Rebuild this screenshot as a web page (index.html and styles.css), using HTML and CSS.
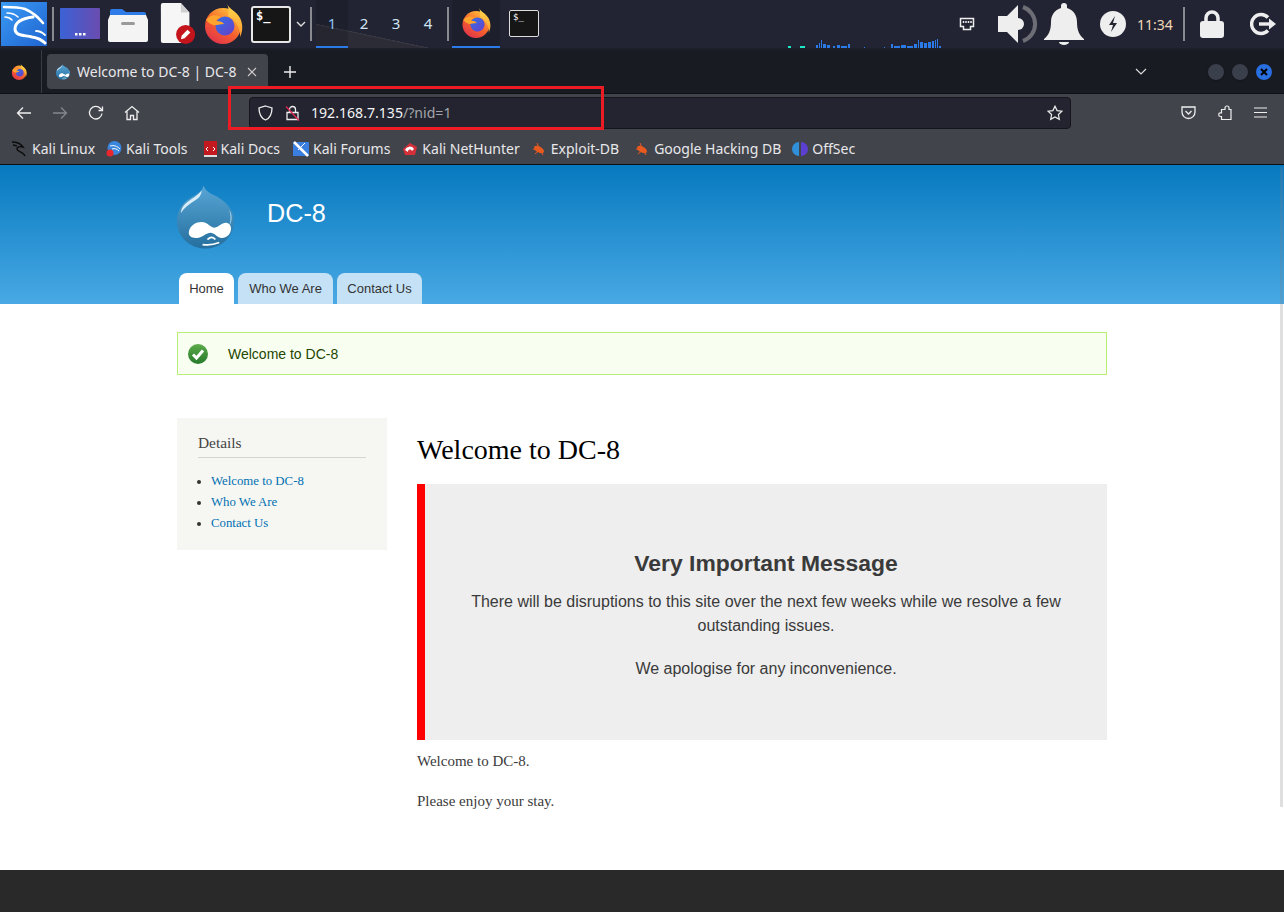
FILE: index.html
```html
<!DOCTYPE html>
<html lang="en">
<head>
    <meta charset="UTF-8">
    <title>Welcome to DC-8 | DC-8</title>
    <link rel="stylesheet" href="styles.css">
</head>
<body>
    <!-- desktop panel -->
    <section class="panel">
        <div class="panel-menu">
            <svg width="46" height="44" viewBox="0 0 46 44" fill="none" stroke="#fff" stroke-linecap="round" stroke-linejoin="round">
                <path d="M3 5c7 0 15 0 21 2 7 3 13 8 18 14" stroke-width="2.600"/>
                <path d="M32 15c-8 1-18 4-18 12 0 7 9 6 17 8 6 1 10 3 13 6" stroke-width="3"/>
                <path d="M6 11c4 0 8 1 11 4M4 15c3 0 5 1 7 3" stroke-width="1.600"/>
                <path d="M35 29c4 0 7 2 9 4" stroke-width="1.800"/>
            </svg>
        </div>
        <div class="launchers">
            <span class="sep sep-first"></span>
            <svg class="launch launch-desk" width="42" height="34" viewBox="0 0 42 34">
                <defs><linearGradient id="desk" x1="0" x2="1"><stop offset="0" stop-color="#3b62d6"/><stop offset="1" stop-color="#6a4cb0"/></linearGradient></defs>
                <rect x="1" y="1" width="40" height="31" rx="1" fill="url(#desk)"/>
                <rect x="16" y="26" width="2.500" height="2.500" fill="#fff"/><rect x="20" y="26" width="2.500" height="2.500" fill="#fff"/><rect x="24" y="26" width="2.500" height="2.500" fill="#fff"/>
            </svg>
            <svg class="launch" width="42" height="38" viewBox="0 0 42 38">
                <path d="M3 6a2 2 0 0 1 2-2h10l4 3h18a2 2 0 0 1 2 2v6H3z" fill="#2f7be8"/>
                <path d="M1 15l2-5h36l2 5v20a2 2 0 0 1-2 2H3a2 2 0 0 1-2-2z" fill="#f4f4f4"/>
                <rect x="14" y="17" width="14" height="3" rx="1.500" fill="#9a9a9a"/>
            </svg>
            <svg class="launch launch-doc" width="38" height="44" viewBox="0 0 40 44">
                <path d="M2 2a2 2 0 0 1 2-2h19l9 10v30a2 2 0 0 1-2 2H4a2 2 0 0 1-2-2z" fill="#f6f6f6"/>
                <path d="M23 0l9 10h-9z" fill="#cfcfcf"/>
                <circle cx="28" cy="33" r="10" fill="#c4141c"/>
                <path d="M23 38l1-4 6-6 3 3-6 6z" fill="#fff"/>
            </svg>
            <svg class="launch" width="40" height="40" viewBox="0 0 40 40">
                <use href="#fox"/>
            </svg>
            <div class="term-big"><span>$_</span></div>
            <svg class="chev" width="10" height="6" viewBox="0 0 10 6" fill="none" stroke="#ddd" stroke-width="1.400"><path d="M1 1l4 4 4-4"/></svg>
            <span class="sep"></span>
        </div>
        <div class="workspaces">
            <span class="ws ws-on">1</span>
            <span class="ws">2</span>
            <span class="ws">3</span>
            <span class="ws">4</span>
        </div>
        <span class="sep"></span>
        <div class="task task-on">
            <svg width="30" height="30" viewBox="0 0 40 40"><use href="#fox"/></svg>
        </div>
        <div class="task">
            <div class="term-small"><span>$_</span></div>
        </div>
        <div class="netload">
            <svg width="156" height="12" viewBox="0 0 156 12">
                <path d="M0 10h3v2H0zM12 10h5v2h-5z" fill="#1de9c8"/>
                <path d="M28 9h2v3h-2zM31 7h1v5h-1zM33 4h1v8h-1zM35 8h3v4h-3zM39 9h3v3h-3zM45 10h2v2h-2zM49 9h3v3h-3zM53 10h6v2h-6zM60 8h2v4h-2zM76 11h1v1h-1zM96 11h1v1h-1zM103 8h2v4h-2zM106 10h6v2h-6zM113 9h5v3h-5zM119 10h6v2h-6zM126 8h3v4h-3zM130 4h1v8h-1zM132 6h3v6h-3zM136 7h3v5h-3zM140 6h3v6h-3zM144 5h2v7h-2zM147 4h1v8h-1zM149 3h1v9h-1zM151 10h2v2h-2z" fill="#2a7be8"/>
            </svg>
        </div>
        <div class="tray">
            <svg class="tray-net" width="16" height="14" viewBox="0 0 16 14" fill="none" stroke="#eee" stroke-width="1.500"><path d="M1.500 1.500h13v8h-3v3h-7v-3h-3z"/><path d="M4.500 4v2M7 4v2M9.500 4v2M12 4v2"/></svg>
            <svg class="tray-vol" width="42" height="40" viewBox="0 0 42 40">
                <path d="M1 12h9L21 1v38L10 28H1z" fill="#eee"/>
                <path d="M21 14a6 6 0 0 1 6 6 6 6 0 0 1-6 6z" fill="#eee"/>
                <path d="M26 3a18 18 0 0 1 0 34" fill="none" stroke="#6c6d75" stroke-width="4"/>
            </svg>
            <svg class="tray-bell" width="40" height="42" viewBox="0 0 40 42">
                <path d="M20 0a3 3 0 0 1 3 3v2c7 2 10 8 10 14 0 8 2 13 7 17v1H0v-1c5-4 7-9 7-17 0-6 3-12 10-14V3a3 3 0 0 1 3-3z" fill="#eee"/>
                <path d="M15 39h10a5 3 0 0 1-10 0z" fill="#eee"/>
            </svg>
            <svg class="tray-power" width="26" height="26" viewBox="0 0 26 26">
                <circle cx="13" cy="13" r="13" fill="#eee"/>
                <path d="M15 5l-6 9h4l-2 7 6-9h-4z" fill="#23252f"/>
            </svg>
            <span class="clock">11:34</span>
            <span class="sep sep-tray"></span>
            <svg class="tray-lock" width="24" height="28" viewBox="0 0 24 28">
                <path d="M6 12V8a6 6 0 0 1 12 0v4" fill="none" stroke="#eee" stroke-width="3.500"/>
                <rect y="11" width="24" height="17" rx="3" fill="#eee"/>
            </svg>
            <svg class="tray-out" width="27" height="24" viewBox="0 0 27 24" fill="none" stroke="#eee" stroke-width="3.400">
                <path d="M18 5.500A9.500 9.500 0 1 0 18 18.500"/>
                <path d="M9 12h12"/>
                <path d="M19 6.500l7 5.500-7 5.500z" fill="#eee" stroke="none"/>
            </svg>
        </div>
    </section>

    <!-- browser chrome -->
    <section class="tabstrip">
        <div class="tab-fox">
            <svg width="16" height="16" viewBox="0 0 40 40"><use href="#fox"/></svg>
        </div>
        <div class="tab">
            <svg width="14" height="16" viewBox="0 0 58 64"><use href="#drop"/></svg>
            <span class="tab-title">Welcome to DC-8 | DC-8</span>
            <svg class="tab-x" width="10" height="10" viewBox="0 0 10 10" stroke="#ccc" stroke-width="1.100"><path d="M1 1l8 8M9 1l-8 8"/></svg>
        </div>
        <svg class="tab-new" width="14" height="14" viewBox="0 0 14 14" stroke="#eee" stroke-width="1.400"><path d="M7 1v12M1 7h12"/></svg>
        <svg class="tab-list" width="12" height="7" viewBox="0 0 12 7" fill="none" stroke="#ddd" stroke-width="1.200"><path d="M1 1l5 5 5-5"/></svg>
        <div class="winbtns">
            <span class="winbtn"></span>
            <span class="winbtn"></span>
            <span class="winbtn winbtn-close">
                <svg width="8" height="8" viewBox="0 0 8 8" stroke="#000" stroke-width="2"><path d="M1 1l6 6M7 1L1 7"/></svg>
            </span>
        </div>
    </section>

    <section class="navbar">
        <div class="nav-left">
            <svg width="16" height="14" viewBox="0 0 16 14" fill="none" stroke="#eee" stroke-width="1.300"><path d="M15 7H1.500M7 1.500L1.500 7 7 12.500"/></svg>
            <svg width="16" height="14" viewBox="0 0 16 14" fill="none" stroke="#85878d" stroke-width="1.300"><path d="M1 7h13.500M9 1.500L14.500 7 9 12.500"/></svg>
            <svg width="16" height="16" viewBox="0 0 16 16" fill="none" stroke="#eee" stroke-width="1.300"><path d="M14 8.500A6.300 6.300 0 1 1 12.500 3.500L14.500 5.500"/><path d="M14.500 1.500v4h-4"/></svg>
            <svg width="16" height="16" viewBox="0 0 16 16" fill="none" stroke="#eee" stroke-width="1.300"><path d="M1 7.500L8 1.500l7 6M3 6.500v8h3.500v-4h3v4H13v-8"/></svg>
        </div>
        <div class="urlbar">
            <svg width="15" height="16" viewBox="0 0 15 16" fill="none" stroke="#eee" stroke-width="1.300"><path d="M7.500 1L14 3c0 6-1.500 10-6.500 12C2.500 13 1 9 1 3z"/></svg>
            <svg class="url-lock" width="15" height="16" viewBox="0 0 15 16" fill="none">
                <path d="M4.500 7V4.500a3 3 0 0 1 6 0V7M2 7.500h11v7H2z" stroke="#eee" stroke-width="1.300"/>
                <path d="M1 1.500l13 14" stroke="#e22850" stroke-width="1.300"/>
            </svg>
            <span class="url-text">192.168.7.135<span class="url-rest">/?nid=1</span></span>
            <svg class="url-star" width="16" height="16" viewBox="0 0 16 16" fill="none" stroke="#eee" stroke-width="1.200"><path d="M8 1.200l2.100 4.400 4.800.6-3.500 3.300.9 4.800L8 12l-4.300 2.300.9-4.800L1.100 6.200l4.800-.6z"/></svg>
        </div>
        <div class="nav-right">
            <svg width="15" height="14" viewBox="0 0 15 14" fill="none" stroke="#eee" stroke-width="1.300"><path d="M1 1h13v5a6.500 6.500 0 0 1-13 0z"/><path d="M4.500 5l3 3 3-3"/></svg>
            <svg width="14" height="16" viewBox="0 0 14 16" fill="none" stroke="#eee" stroke-width="1.200"><path d="M4.500 4.500h2.500V3a2 2 0 0 1 4 0v1.500h2v10H3.500v-3h-1a1.800 1.800 0 0 1 0-3.600h1V4.500z"/></svg>
            <svg width="13" height="11" viewBox="0 0 13 11" stroke="#eee" stroke-width="1.200"><path d="M0 1h13M0 5.500h13M0 10h13"/></svg>
        </div>
    </section>

    <section class="bookmarks">
        <a class="bm">
            <svg width="16" height="16" viewBox="0 0 16 16" fill="none" stroke="#0c0c0c" stroke-width="1.500"><path d="M0 1c5 0 9 2 11 5-3-1-6 0-6 2 0 3 6 2 8 7"/><path d="M1 4c2 0 3 1 4 1"/></svg>
            Kali Linux
        </a>
        <a class="bm">
            <svg width="16" height="16" viewBox="0 0 16 16"><circle cx="8.500" cy="7" r="7" fill="#3a86dc"/><path d="M4 5c4-1 7 0 10 3M6 8c3-1 5 0 7 2" stroke="#fff" fill="none"/><circle cx="4" cy="12" r="3.500" fill="#e8262c"/></svg>
            Kali Tools
        </a>
        <a class="bm">
            <svg width="14" height="16" viewBox="0 0 14 16"><rect x="1" width="13" height="15" fill="#c41a1f"/><rect x="1" y="14" width="13" height="2" fill="#ddd"/><path d="M5 6l-2 2 2 2M10 6l2 2-2 2" stroke="#fff" fill="none"/></svg>
            Kali Docs
        </a>
        <a class="bm">
            <svg width="16" height="16" viewBox="0 0 16 16"><rect y="1" width="16" height="14" fill="#3a7fe0"/><path d="M1 1l14 14" stroke="#fff" stroke-width="2.500"/><path d="M12 2L5 9" stroke="#fff"/></svg>
            Kali Forums
        </a>
        <a class="bm">
            <svg width="16" height="16" viewBox="0 0 16 16"><path d="M1 8l7-6 7 4-2 8H3z" fill="#d4303a"/><path d="M3 9a5 5 0 0 1 9-1l-2 2a2 2 0 0 0-4 1z" fill="#fff"/></svg>
            Kali NetHunter
        </a>
        <a class="bm">
            <svg width="16" height="16" viewBox="0 0 16 16"><use href="#bug"/></svg>
            Exploit-DB
        </a>
        <a class="bm">
            <svg width="16" height="16" viewBox="0 0 16 16"><use href="#bug"/></svg>
            Google Hacking DB
        </a>
        <a class="bm">
            <svg width="16" height="16" viewBox="0 0 16 16"><path d="M7 1a7 7 0 0 0 0 14z" fill="#2f8fd8"/><path d="M9 1a7 7 0 0 1 0 14z" fill="#5b3fd0"/></svg>
            OffSec
        </a>
    </section>

    <!-- site -->
    <header class="site-head">
        <div class="site-brand">
            <svg class="site-logo" width="57" height="64" viewBox="0 0 58 64"><use href="#drop"/></svg>
            <span class="site-name">DC-8</span>
        </div>
        <nav class="site-tabs">
            <a class="site-tab site-tab-on">Home</a>
            <a class="site-tab">Who We Are</a>
            <a class="site-tab">Contact Us</a>
        </nav>
    </header>

    <main class="site-body">
        <div class="status">
            <svg width="20" height="20" viewBox="0 0 20 20">
                <circle cx="10" cy="10" r="10" fill="url(#okfill)"/>
                <path d="M5 10.500l3.500 3.500L15 6.500" fill="none" stroke="#fff" stroke-width="3"/>
            </svg>
            <span>Welcome to DC-8</span>
        </div>
        <div class="columns">
            <aside class="side">
                <h2 class="side-title">Details</h2>
                <ul class="side-list">
                    <li><a>Welcome to DC-8</a></li>
                    <li><a>Who We Are</a></li>
                    <li><a>Contact Us</a></li>
                </ul>
            </aside>
            <article class="content">
                <h1 class="page-title">Welcome to DC-8</h1>
                <div class="notice">
                    <h3 class="notice-head">Very Important Message</h3>
                    <p>There will be disruptions to this site over the next few weeks while we resolve a few outstanding issues.</p>
                    <p>We apologise for any inconvenience.</p>
                </div>
                <p class="text">Welcome to DC-8.</p>
                <p class="text">Please enjoy your stay.</p>
            </article>
        </div>
    </main>

    <footer class="site-foot"></footer>

    <!-- things that lie over the page -->
    <div class="scroll-thumb"></div>
    <div class="red-mark"></div>

    <svg class="defs" width="0" height="0">
        <defs>
            <linearGradient id="foxball" x1="0.8" y1="0.1" x2="0.2" y2="1"><stop offset="0" stop-color="#ffbd3a"/><stop offset="0.5" stop-color="#f6602d"/><stop offset="1" stop-color="#e0304f"/></linearGradient>
            <linearGradient id="foxtail" x1="0" y1="0" x2="0" y2="1"><stop offset="0" stop-color="#ffd84d"/><stop offset="1" stop-color="#ff9a2e"/></linearGradient>
            <linearGradient id="foxcore" x1="0" y1="0" x2="1" y2="1"><stop offset="0" stop-color="#2f72e8"/><stop offset="1" stop-color="#6a3fc8"/></linearGradient>
            <linearGradient id="dropfill" x1="0" y1="0" x2="0" y2="1"><stop offset="0" stop-color="#58a6d6"/><stop offset="1" stop-color="#256f9e"/></linearGradient>
            <linearGradient id="okfill" x1="0" y1="0" x2="0" y2="1"><stop offset="0" stop-color="#5cab4a"/><stop offset="1" stop-color="#267a2b"/></linearGradient>
            <g id="fox">
                <circle cx="20" cy="22" r="18" fill="url(#foxball)"/>
                <path d="M24 0c2 5 9 7 13 14 3 6 3 13 0 19 1-8-4-17-12-21 1-4 1-8-1-12z" fill="url(#foxtail)"/>
                <circle cx="22" cy="22" r="9.500" fill="url(#foxcore)"/>
                <path d="M3 16c4-5 9-6 15-3-2 1-4 2-5 4 4 0 7 1 8 3-5 0-9 2-11 1-3-1-5-3-7-5z" fill="#ffa52e"/>
            </g>
            <g id="drop">
                <path d="M27 0c-1 6-7 9-14 13C5 18 0 26 0 36c0 16 13 28 29 28s29-12 29-28c0-12-9-20-18-25C34 8 29 6 27 0z" fill="url(#dropfill)"/>
                <path d="M25 5c-3 5-12 9-17 14-3 3-4 6-4 9 3-5 8-9 13-12 5-3 8-6 8-11z" fill="#d8edf8"/>
                <path d="M53 25c2 5 2 11 0 16 3-3 4-11 0-16z" fill="#a6d3ec"/>
                <path d="M12 48c0-6 6-11 13-11 6 0 8 5 13 6 5-1 8-6 13-5 4 1 5 6 3 10-2 4-6 6-10 5-4-1-6-5-10-5-4 0-7 4-12 5-6 1-10-1-10-5z" fill="#fff"/>
                <path d="M26 60c6 1 12 0 17-2M31 55c3-3 6-3 8 0" fill="none" stroke="#fff" stroke-width="1.800"/>
            </g>
            <g id="bug">
                <ellipse cx="8" cy="8.500" rx="5.500" ry="3" transform="rotate(30 8 8.500)" fill="#e8591f"/>
                <path d="M2 8l3 .5M4 13l3-2.500M6 2l1.500 3.500M12 14l-1.500-3" stroke="#e8591f" fill="none"/>
            </g>
        </defs>
    </svg>
</body>
</html>
```

FILE: styles.css
```css
* {
    margin: 0;
    padding: 0;
    box-sizing: border-box;
}
html, body {
    height: 100%;
    overflow: hidden;
}
body {
    display: flex;
    flex-direction: column;
    background-color: #fff;
    font-family: "Liberation Sans", sans-serif;
    position: relative;
}
svg {
    display: block;
    flex-shrink: 0;
}
.defs {
    position: absolute;
}

/* panel */
.panel {
    height: 50px;
    background-color: #222433;
    border-bottom: 2px solid #1c1e28;
    display: flex;
    align-items: center;
    font-family: "Noto Sans", sans-serif;
    flex-shrink: 0;
}
.panel-menu {
    width: 46px;
    height: 44px;
    margin-left: 1px;
    background: linear-gradient(135deg, #3a9bf5, #1f63d0);
    display: flex;
    align-items: center;
    justify-content: center;
}
.launchers {
    display: flex;
    align-items: center;
}
.launch {
    margin-left: 6px;
}
.launch-desk {
    margin-left: 5px;
}
.launch-doc {
    margin-left: 10px;
}
.sep {
    width: 2px;
    height: 34px;
    background-color: #8a8b90;
    display: block;
    flex-shrink: 0;
}
.sep-first {
    margin-left: 5px;
}
.term-big {
    width: 40px;
    height: 37px;
    margin-left: 8px;
    background-color: #161616;
    border: 2px solid #e8e8e8;
    border-radius: 3px;
    color: #fff;
    font: bold 12px/14px "DejaVu Sans Mono", monospace;
    padding: 1px 3px;
}
.chev {
    margin: 0 4px 0 5px;
}
.workspaces {
    display: flex;
    height: 48px;
    margin-right: 3px;
    margin-left: 4px;
    background: linear-gradient(192deg, transparent 67.500%, #3a3b45 68%, #2b2c36 70%);
}
.ws {
    width: 32px;
    display: flex;
    align-items: center;
    justify-content: center;
    color: #cfe4f5;
    font-size: 15px;
    border-bottom: 2px solid transparent;
}
.ws-on {
    background-color: rgba(0, 0, 0, 0.12);
    border-bottom-color: #2a7be8;
    color: #8fc4ee;
}
.task {
    width: 48px;
    height: 48px;
    display: flex;
    align-items: center;
    justify-content: center;
    border-bottom: 2px solid transparent;
}
.task-on {
    margin-left: 3px;
    background-color: #1d1f2c;
    border-bottom-color: #2a7be8;
}
.term-small {
    width: 30px;
    height: 27px;
    background-color: #161616;
    border: 1px solid #ddd;
    border-radius: 2px;
    color: #fff;
    font: 9px/11px "DejaVu Sans Mono", monospace;
    padding: 1px 3px;
}
.netload {
    align-self: flex-end;
    margin-left: 240px;
}
.tray {
    display: flex;
    align-items: center;
    margin-left: 15px;
}
.tray-vol {
    margin-left: 22px;
}
.tray-bell {
    margin-left: 5px;
}
.tray-power {
    margin-left: 16px;
}
.clock {
    margin-left: 11px;
    color: #f2d9b8;
    font-size: 14px;
}
.sep-tray {
    margin-left: 10px;
}
.tray-lock {
    margin-left: 15px;
}
.tray-out {
    margin-left: 26px;
}

/* browser */
.tabstrip {
    height: 43px;
    background-color: #191b22;
    display: flex;
    align-items: center;
    font-family: "Noto Sans", sans-serif;
    flex-shrink: 0;
}
.tab-fox {
    width: 42px;
    height: 100%;
    border-right: 1px solid #3a3c44;
    display: flex;
    align-items: center;
    justify-content: center;
    padding-right: 3px;
    margin-right: 5px;
}
.tab {
    width: 221px;
    height: 35px;
    background-color: #42444c;
    border-radius: 4px;
    display: flex;
    align-items: center;
    padding: 0 11px 0 9px;
    color: #e8e8ea;
    gap: 7px;
}
.tab-title {
    font-size: 14px;
    white-space: nowrap;
}
.tab-x {
    margin-left: auto;
}
.tab-new {
    margin-left: 15px;
}
.tab-list {
    margin-left: auto;
}
.winbtns {
    display: flex;
    gap: 6px;
    margin-left: 60px;
    margin-right: 11px;
}
.winbtn {
    width: 18px;
    height: 18px;
    border-radius: 50%;
    background-color: #3a3f4c;
    border: 1px solid #15161b;
    display: flex;
    align-items: center;
    justify-content: center;
}
.winbtn-close {
    background-color: #2a6fe0;
}
.navbar {
    height: 38px;
    background-color: #42444c;
    border-top: 1px solid #0f1014;
    display: flex;
    align-items: center;
    font-family: "Noto Sans", sans-serif;
    flex-shrink: 0;
}
.nav-left {
    width: 249px;
    display: flex;
    align-items: center;
    gap: 20px;
    padding-left: 16px;
}
.urlbar {
    width: 822px;
    height: 32px;
    background-color: #23242f;
    border: 1px solid #15161b;
    border-radius: 4px;
    display: flex;
    align-items: center;
    padding: 0 7px 0 8px;
}
.url-lock {
    margin-left: 12px;
}
.url-text {
    margin-left: 11px;
    color: #f4f4f6;
    font-size: 14.100px;
}
.url-rest {
    color: #a4a5aa;
}
.url-star {
    margin-left: auto;
}
.nav-right {
    flex: 1;
    display: flex;
    align-items: center;
    gap: 22px;
    padding-left: 110px;
}
.bookmarks {
    height: 34px;
    background-color: #42444c;
    border-bottom: 1px solid #0f1014;
    display: flex;
    align-items: center;
    gap: 13px;
    padding-left: 12px;
    padding-top: 2px;
    font-family: "Noto Sans", sans-serif;
    flex-shrink: 0;
}
.bm {
    display: flex;
    align-items: center;
    gap: 4px;
    color: #e8e8ea;
    font-size: 14px;
    white-space: nowrap;
}
/* the screenshot's ui font runs a little narrower or wider per label */
.bm:nth-child(1) {
    margin-right: -2px;
}
.bm:nth-child(2) {
    margin-right: 2px;
}
.bm:nth-child(4) {
    margin-right: -1px;
}
.bm:nth-child(5) {
    margin-right: -2px;
}
.bm:nth-child(6) {
    margin-right: 2px;
}
.bm:nth-child(7) {
    margin-right: -2px;
}

/* site header */
.site-head {
    height: 139px;
    background: linear-gradient(to bottom, #0779bf, #48a9e4);
    padding: 20px 0 0 177px;
    flex-shrink: 0;
}
.site-brand {
    display: flex;
    align-items: center;
    height: 64px;
}
.site-name {
    margin-left: 33px;
    margin-bottom: 7px;
    color: #fff;
    font-size: 25.200px;
}
.site-tabs {
    display: grid;
    grid-template-columns: 55px 95px 85px;
    gap: 4px;
    margin-top: 24px;
    padding-left: 2px;
}
.site-tab {
    height: 31px;
    background-color: #c4e1f6;
    border-radius: 8px 8px 0 0;
    color: #333;
    font-size: 13px;
    line-height: 32px;
    text-align: center;
}
.site-tab-on {
    background-color: #fff;
}

/* site body */
.site-body {
    flex: 1;
    padding: 28px 177px 0;
    background-color: #fff;
}
.status {
    height: 43px;
    width: 930px;
    background-color: #f8fff0;
    border: 1px solid #bbee77;
    display: flex;
    align-items: center;
    padding-left: 10px;
    color: #234600;
    font-size: 14px;
    gap: 20px;
}
.columns {
    display: flex;
    gap: 30px;
    margin-top: 43px;
    width: 930px;
}
.side {
    width: 210px;
    height: 132px;
    background-color: #f6f6f2;
    padding: 15px 21px 0;
    font-family: "Liberation Serif", serif;
}
.side-title {
    font-size: 15.400px;
    font-weight: normal;
    color: #444;
    line-height: 20px;
    padding-bottom: 4px;
    border-bottom: 1px solid #d6d6d0;
}
.side-list {
    list-style: disc;
    margin-top: 13px;
    padding-left: 13px;
    font-size: 12.800px;
    line-height: 21px;
    color: #333;
}
.side-list a {
    color: #0071b3;
}
.content {
    flex: 1;
    font-family: "Liberation Serif", serif;
}
.page-title {
    font-size: 28px;
    font-weight: normal;
    color: #000;
    line-height: 32px;
    margin-top: 16px;
}
.notice {
    height: 256px;
    margin-top: 18px;
    background-color: #eee;
    border-left: 8px solid #f00;
    padding: 65px 30px 0;
    text-align: center;
    font-family: "Liberation Sans", sans-serif;
    color: #3a3a3a;
    font-size: 16px;
    line-height: 24px;
}
.notice-head {
    font-size: 22.900px;
    line-height: 28px;
    margin-bottom: 13px;
}
.notice p + p {
    margin-top: 19px;
}
.text {
    color: #3b3b3b;
    font-size: 15px;
    line-height: 21px;
    margin-top: 11px;
}
.text + .text {
    margin-top: 19px;
}
.site-foot {
    height: 42px;
    background-color: #292929;
    flex-shrink: 0;
}

/* overlays */
.scroll-thumb {
    position: absolute;
    right: 1px;
    top: 167px;
    width: 3px;
    height: 640px;
    background-color: rgba(128, 128, 128, 0.25);
}
.red-mark {
    position: absolute;
    left: 228px;
    top: 86px;
    width: 376px;
    height: 44px;
    border: 3px solid #ed1c24;
}
```
